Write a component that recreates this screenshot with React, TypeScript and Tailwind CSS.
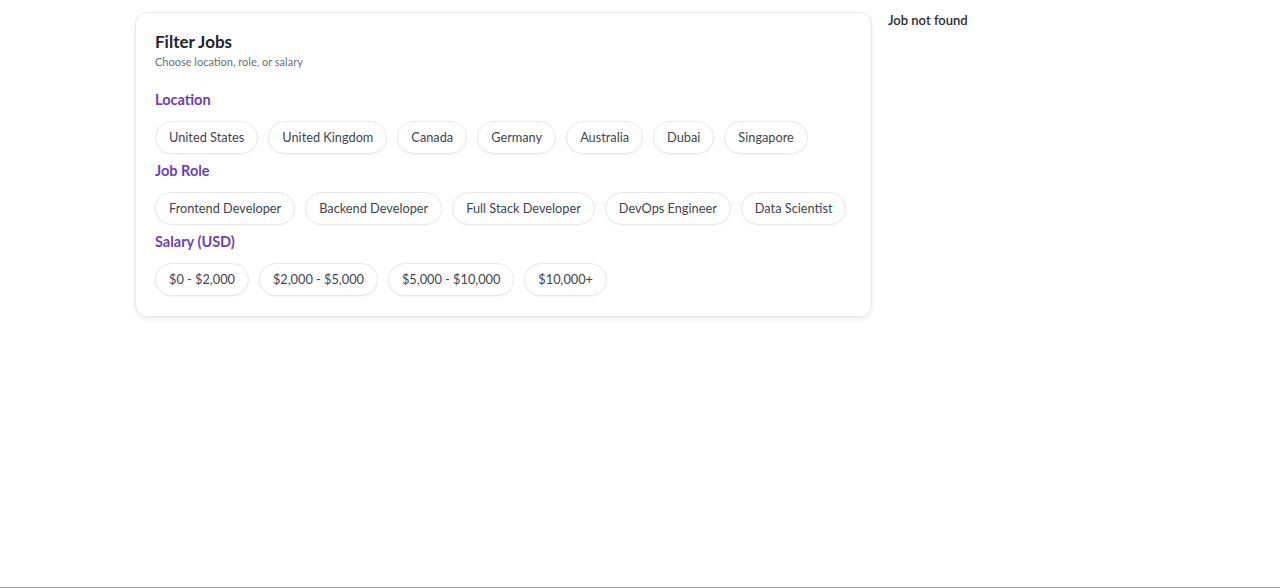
import React, { useState } from 'react'

const locations = ['United States', 'United Kingdom', 'Canada', 'Germany', 'Australia', 'Dubai', 'Singapore']
const roles = ['Frontend Developer', 'Backend Developer', 'Full Stack Developer', 'DevOps Engineer', 'Data Scientist']
const salaries = ['$0 - $2,000', '$2,000 - $5,000', '$5,000 - $10,000', '$10,000+']

function Chip({ label, active, onClick }: { label: string; active: boolean; onClick: () => void }) {
    return (
        <button
            type="button"
            onClick={onClick}
            className={`h-[33px] px-[13px] rounded-full border text-[12.75px] leading-none shadow-[0_1px_2px_rgba(0,0,0,0.04)] transition-colors ${active ? 'border-[#7c4dcc] bg-[#f3edff] text-[#5b34a8]' : 'border-[#e6e8ec] bg-white text-[#3f4450]'}`}
        >
            {label}
        </button>
    )
}

function Group({ title, items, selected, onSelect }: { title: string; items: string[]; selected: string; onSelect: (v: string) => void }) {
    return (
        <div className="flex flex-col">
            <h4 className="text-[14.5px] font-bold text-[#6a3fbf] leading-5">{title}</h4>
            <div className="flex flex-wrap gap-[10px] mt-[11px]">
                {items.map((item) => (
                    <Chip key={item} label={item} active={selected === item} onClick={() => onSelect(selected === item ? '' : item)} />
                ))}
            </div>
        </div>
    )
}

export default function App() {
    const [location, setLocation] = useState('')
    const [role, setRole] = useState('')
    const [salary, setSalary] = useState('')

    return (
        <div className="min-h-[588px] bg-white border-b border-[#9a9a9a] font-['Lato','Noto_Sans',sans-serif]">
            <div className="flex items-start gap-[16px] pl-[135px] pt-[12px]">
                {/* Filter card */}
                <div className="w-[737px] rounded-xl border border-[#e8eaee] bg-white px-[19px] pt-[17px] pb-[20px] shadow-[0_2px_4px_rgba(0,0,0,0.08)]">
                    <h3 className="text-[17px] font-bold text-[#1f2430] leading-6">Filter Jobs</h3>
                    <p className="text-[11px] text-[#6b6f78] leading-4">Choose location, role, or salary</p>

                    <div className="flex flex-col gap-[7px] mt-[20px]">
                        <Group title="Location" items={locations} selected={location} onSelect={setLocation} />
                        <Group title="Job Role" items={roles} selected={role} onSelect={setRole} />
                        <Group title="Salary (USD)" items={salaries} selected={salary} onSelect={setSalary} />
                    </div>
                </div>

                {/* Results */}
                <p className="text-[13px] font-semibold text-[#2a2d33] -mt-[1px]">Job not found</p>
            </div>
        </div>
    )
}
